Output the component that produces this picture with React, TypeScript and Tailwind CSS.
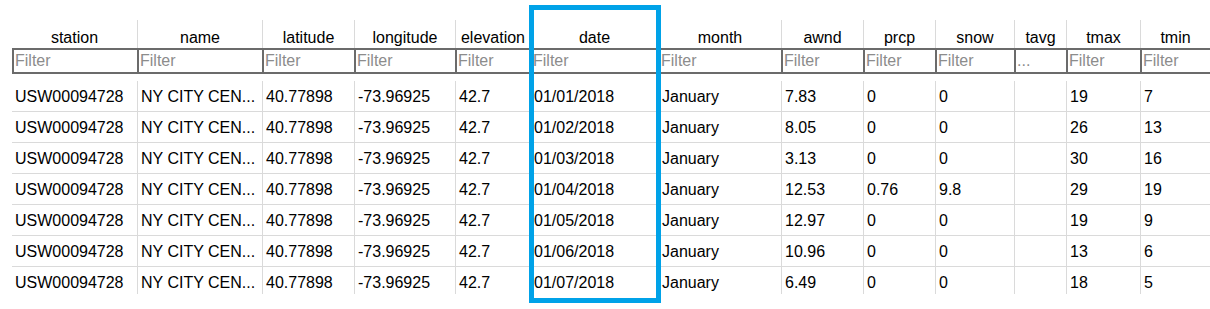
const columns = [
  "station",
  "name",
  "latitude",
  "longitude",
  "elevation",
  "date",
  "month",
  "awnd",
  "prcp",
  "snow",
  "tavg",
  "tmax",
  "tmin",
];

const rows = [
  ["USW00094728", "NY CITY CEN...", "40.77898", "-73.96925", "42.7", "01/01/2018", "January", "7.83", "0", "0", "", "19", "7"],
  ["USW00094728", "NY CITY CEN...", "40.77898", "-73.96925", "42.7", "01/02/2018", "January", "8.05", "0", "0", "", "26", "13"],
  ["USW00094728", "NY CITY CEN...", "40.77898", "-73.96925", "42.7", "01/03/2018", "January", "3.13", "0", "0", "", "30", "16"],
  ["USW00094728", "NY CITY CEN...", "40.77898", "-73.96925", "42.7", "01/04/2018", "January", "12.53", "0.76", "9.8", "", "29", "19"],
  ["USW00094728", "NY CITY CEN...", "40.77898", "-73.96925", "42.7", "01/05/2018", "January", "12.97", "0", "0", "", "19", "9"],
  ["USW00094728", "NY CITY CEN...", "40.77898", "-73.96925", "42.7", "01/06/2018", "January", "10.96", "0", "0", "", "13", "6"],
  ["USW00094728", "NY CITY CEN...", "40.77898", "-73.96925", "42.7", "01/07/2018", "January", "6.49", "0", "0", "", "18", "5"],
];

const grid =
  "grid grid-cols-[125px_125px_92px_101px_75px_128px_123px_82px_72px_79px_52px_74px_70px]";

export default function App() {
  return (
    <div className="relative h-[309px] w-[1210px] overflow-hidden bg-white font-['Liberation_Sans',Arial,sans-serif] text-[16px] text-black">
      <div className="h-[294px] overflow-hidden pl-[12px] pt-[20px]">
        {/* header */}
        <div className={`${grid} h-[28px]`}>
          {columns.map((c, i) => (
            <div
              key={c}
              className={`flex items-end justify-center pb-[1px] leading-[18px] ${
                i > 0 ? "border-l border-[#dadada]" : ""
              }`}
            >
              {c}
            </div>
          ))}
        </div>

        {/* filters */}
        <div className={`${grid} h-[26px] border-y-2 border-[#6b6b6b]`}>
          {columns.map((c) => (
            <div
              key={c}
              className="flex items-center border-l-2 border-[#6b6b6b] pl-[1px] leading-[18px] text-[#8c8c8c]"
            >
              {c === "tavg" ? "..." : "Filter"}
            </div>
          ))}
        </div>

        {/* data */}
        <div className="mt-[7px]">
          {rows.map((r, ri) => (
            <div
              key={ri}
              className={`${grid} border-b border-[#dadada] ${ri === 0 ? "h-[31px]" : "h-[31px]"}`}
            >
              {r.map((v, i) => (
                <div
                  key={i}
                  className={`whitespace-nowrap pl-[3px] pt-[7px] leading-[18px] ${
                    i > 0 ? "border-l border-[#dadada]" : ""
                  }`}
                >
                  {v}
                </div>
              ))}
            </div>
          ))}
        </div>
      </div>

      {/* highlight around the date column */}
      <div className="pointer-events-none absolute left-[529px] top-[5px] h-[298px] w-[132px] border-[5px] border-[#00a2e8]" />
    </div>
  );
}
